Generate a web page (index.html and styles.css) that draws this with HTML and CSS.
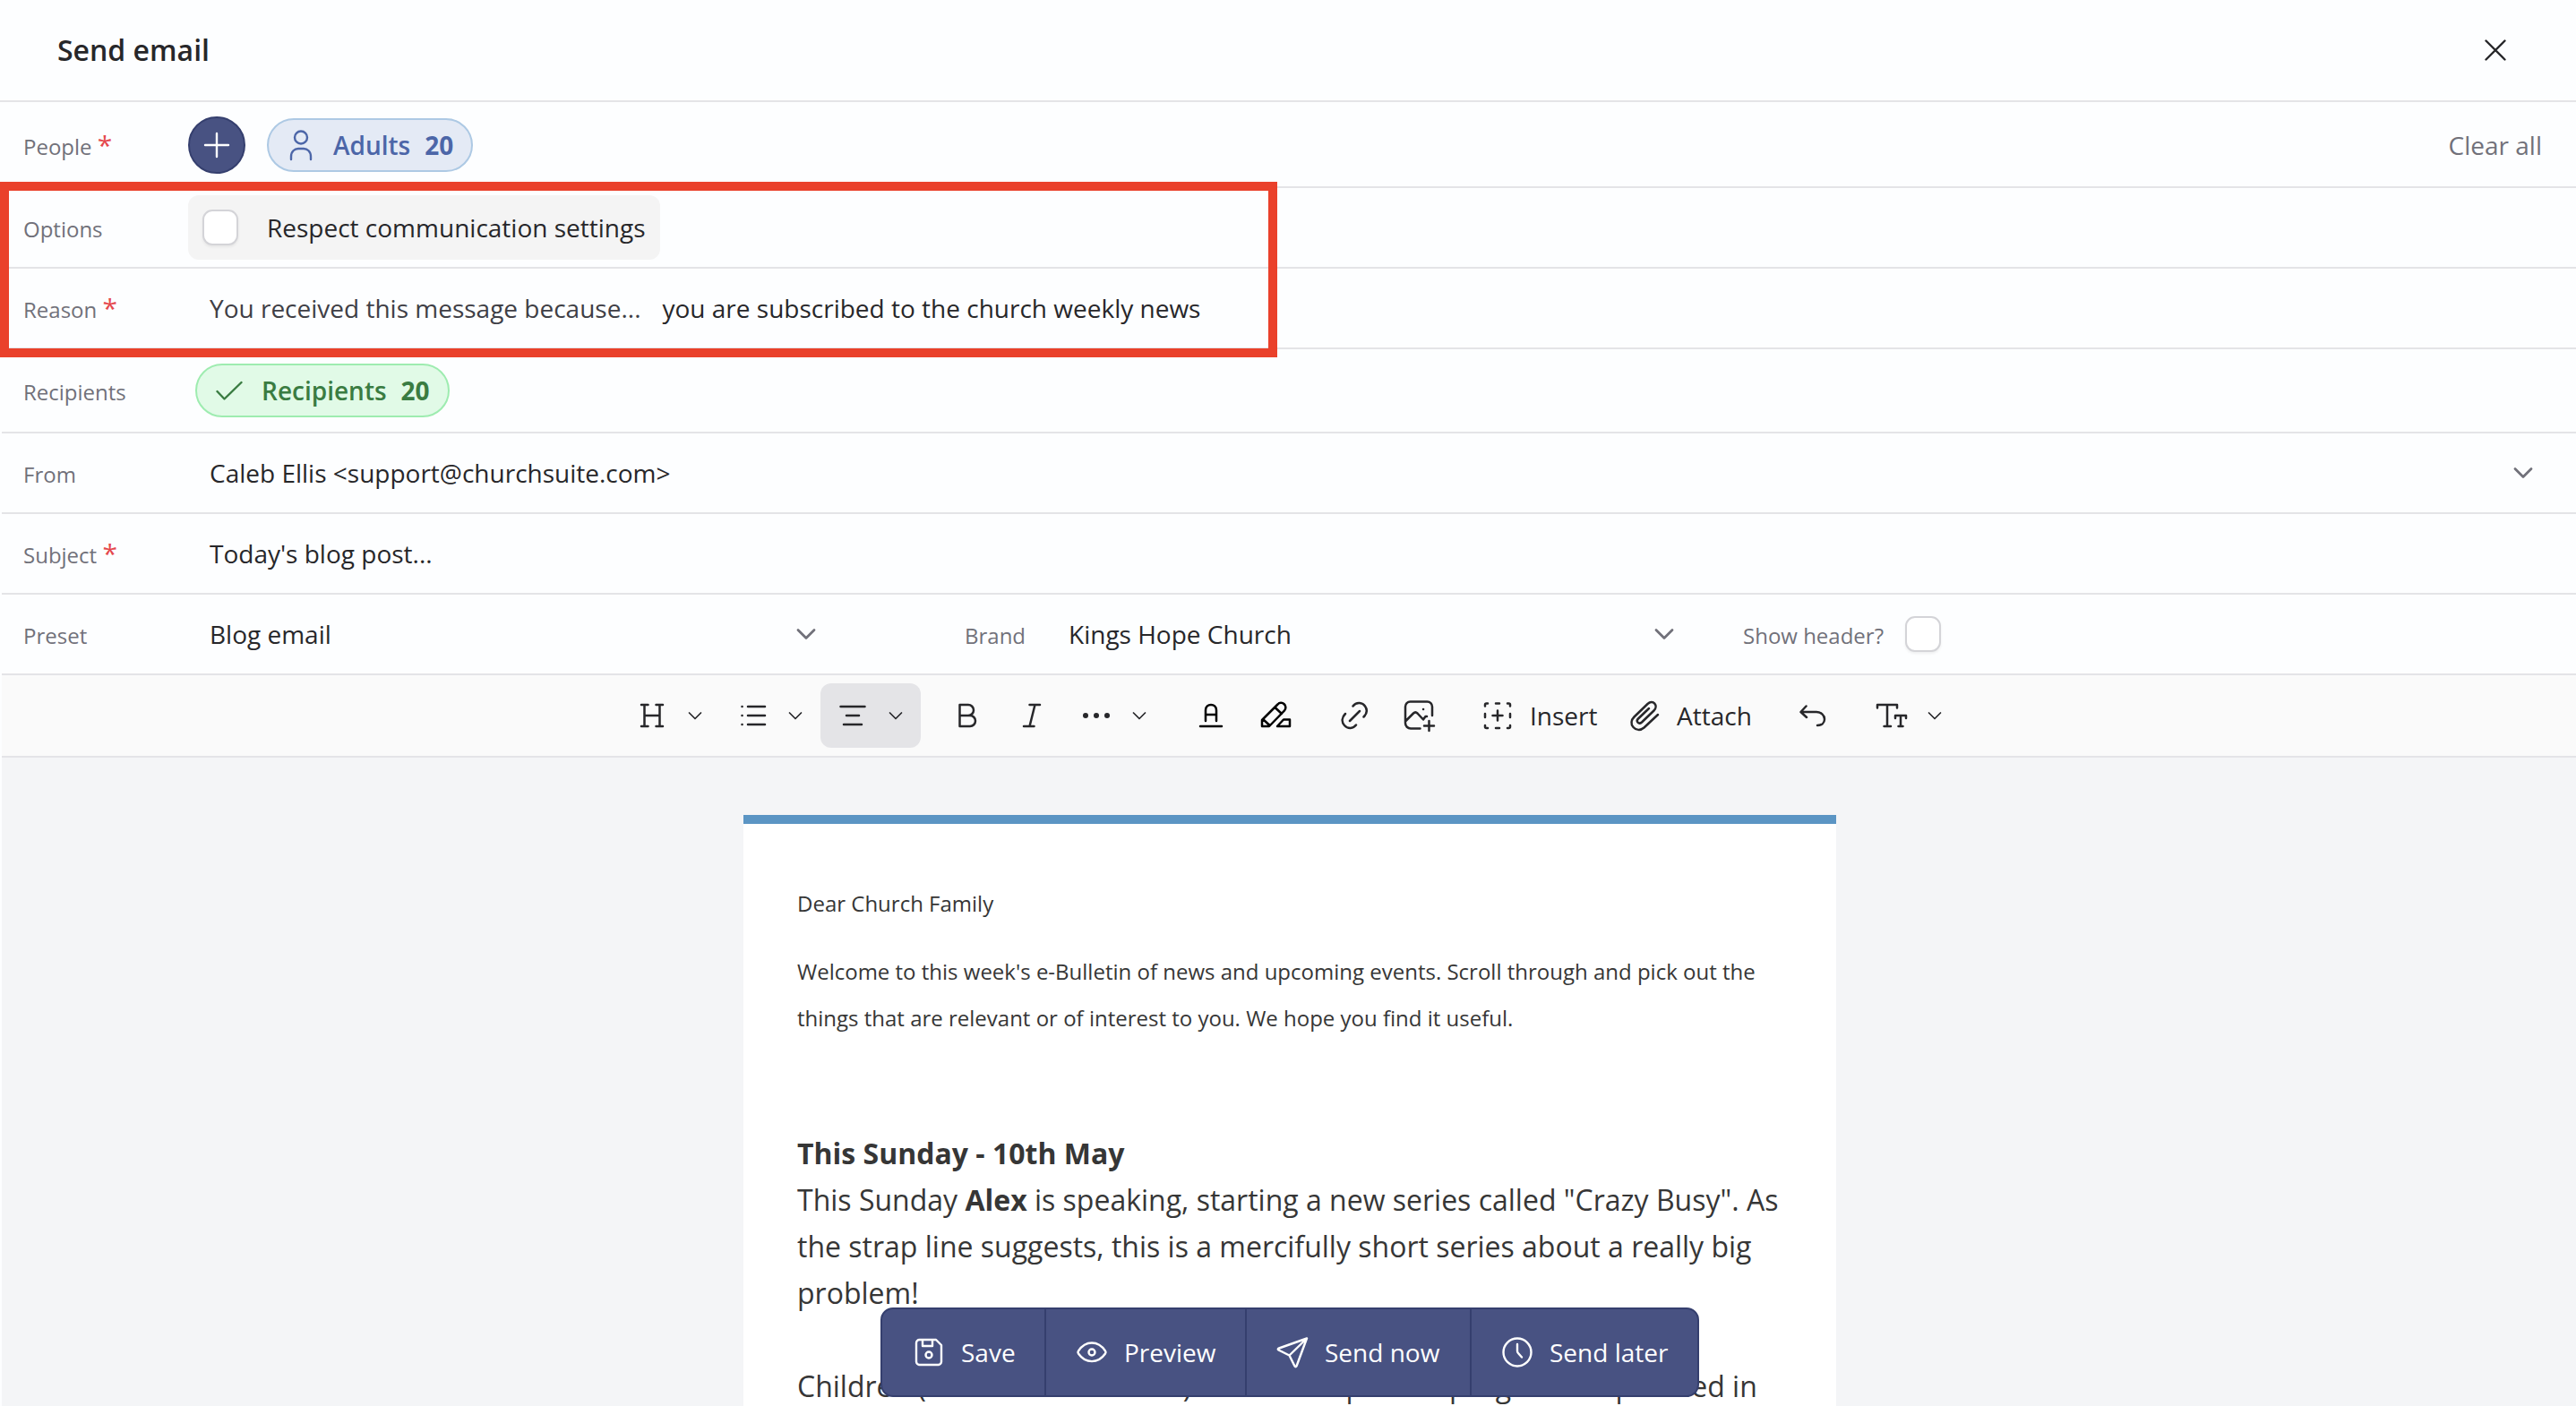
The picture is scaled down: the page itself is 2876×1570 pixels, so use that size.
FILE: index.html
```html
<!DOCTYPE html>
<html lang="en">
<head>
    <meta charset="UTF-8">
    <meta name="viewport" content="width=device-width, initial-scale=1.0">
    <title>Send email</title>
    <link rel="stylesheet" href="styles.css">
</head>
<body>
    <header class="header">
        <h1>Send email</h1>
        <svg class="icon close" viewBox="0 0 48 48"><path d="M13.500 13.500l21 21M34.500 13.500l-21 21"/></svg>
    </header>

    <main class="content">
        <!-- Form rows -->
        <div class="row row-people">
            <label class="label">People <span class="required">*</span></label>
            <button class="add-button">
                <svg class="icon" viewBox="0 0 48 48"><path d="M24 11v26M11 24h26"/></svg>
            </button>
            <div class="pill pill-blue">
                <svg class="icon" viewBox="0 0 48 48"><circle cx="24" cy="15.500" r="7"/><path d="M13 40v-3c0-6 4-9 8-9h6c4 0 8 3 8 9v3"/></svg>
                <span>Adults</span>
                <span class="count">20</span>
            </div>
            <a class="clear-all">Clear all</a>
        </div>
        <div class="row">
            <label class="label">Options</label>
            <div class="option">
                <span class="checkbox"></span>
                <span>Respect communication settings</span>
            </div>
        </div>
        <div class="row">
            <label class="label">Reason <span class="required">*</span></label>
            <span class="value prefix">You received this message because...</span>
            <span class="reason">you are subscribed to the church weekly news</span>
        </div>
        <div class="row row-recipients">
            <label class="label">Recipients</label>
            <div class="pill pill-green">
                <svg class="icon" viewBox="0 0 48 48"><path d="M10.500 25l8 8.500 19-18.500"/></svg>
                <span>Recipients</span>
                <span class="count">20</span>
            </div>
        </div>
        <div class="row">
            <label class="label">From</label>
            <span class="value">Caleb Ellis &lt;support@churchsuite.com&gt;</span>
            <svg class="select-arrow from-arrow" viewBox="0 0 24 24"><path d="M3 7.500l9 9 9-9"/></svg>
        </div>
        <div class="row">
            <label class="label">Subject <span class="required">*</span></label>
            <span class="value">Today's blog post...</span>
        </div>
        <div class="row row-preset">
            <div class="field">
                <label class="label">Preset</label>
                <span class="value">Blog email</span>
                <svg class="select-arrow" viewBox="0 0 24 24"><path d="M3 7.500l9 9 9-9"/></svg>
            </div>
            <div class="field">
                <label class="label">Brand</label>
                <span class="value">Kings Hope Church</span>
                <svg class="select-arrow" viewBox="0 0 24 24"><path d="M3 7.500l9 9 9-9"/></svg>
            </div>
            <div class="field">
                <label class="label">Show header?</label>
                <span class="checkbox"></span>
            </div>
        </div>

        <!-- Editor toolbar -->
        <div class="toolbar">
            <div class="tool-group">
                <button class="tool">
                    <svg class="icon" viewBox="0 0 48 48"><path d="M15.500 12v24M32.500 12v24M12 12h7.500M28.500 12H36M12 36h7.500M28.500 36H36M15.500 24h17"/></svg>
                    <svg class="arrow" viewBox="0 0 24 24"><path d="M5.500 9l6.500 6.500L18.500 9"/></svg>
                </button>
                <button class="tool">
                    <svg class="icon" viewBox="0 0 48 48"><path d="M19 14h19M19 24h19M19 34h19M12.500 14h.1M12.500 24h.1M12.500 34h.1"/></svg>
                    <svg class="arrow" viewBox="0 0 24 24"><path d="M5.500 9l6.500 6.500L18.500 9"/></svg>
                </button>
                <button class="tool active">
                    <svg class="icon" viewBox="0 0 48 48"><path d="M10.500 14h27M17 24h14M14 34h20"/></svg>
                    <svg class="arrow" viewBox="0 0 24 24"><path d="M5.500 9l6.500 6.500L18.500 9"/></svg>
                </button>
            </div>
            <div class="tool-group">
                <button class="tool"><svg class="icon" viewBox="0 0 48 48"><path d="M15.500 12h9.500a5.800 5.800 0 0 1 0 12h-9.500zM25 24h2a6 6 0 0 1 0 12H15.500V24"/></svg></button>
                <button class="tool"><svg class="icon" viewBox="0 0 48 48"><path d="M21.500 12H33M15 36h11.500M27.500 12l-6 24"/></svg></button>
                <button class="tool">
                    <svg class="icon dots" viewBox="0 0 48 48"><circle cx="12" cy="24" r="3"/><circle cx="24" cy="24" r="3"/><circle cx="36" cy="24" r="3"/></svg>
                    <svg class="arrow" viewBox="0 0 24 24"><path d="M5.500 9l6.500 6.500L18.500 9"/></svg>
                </button>
            </div>
            <div class="tool-group">
                <button class="tool dark"><svg class="icon" viewBox="0 0 48 48"><path d="M12 36h24M18 30V18c0-8 12-8 12 0v12M18 23h12"/></svg></button>
                <button class="tool dark"><svg class="icon" viewBox="0 0 48 48"><path d="M9 36v-7L26.500 11.500a5 5 0 0 1 7.500 7L17 36zM23.500 15l7.500 7M10.500 28.500l7 6.500M26 36l7-7.500h7V36z"/></svg></button>
            </div>
            <div class="tool-group">
                <button class="tool"><svg class="icon" viewBox="0 0 48 48"><path d="M19 30l11-11M22.500 13.500c4-5.500 11-4 13.500 0 2.800 4 2 8.500-1.500 12M14 22c-4 4-4.500 9-1 13 4 4.500 10 3.500 13-.500"/></svg></button>
                <button class="tool"><svg class="icon" viewBox="0 0 48 48"><path d="M25.500 38.500H15a6 6 0 0 1-6-6V14a5.500 5.500 0 0 1 5.500-5.500h19A5.500 5.500 0 0 1 39 14v10M9.500 30l8.500-8.500c1.500-1.500 3-1.500 4.500 0l6.500 7 2.500-3.500H33M29 17h.1M35.500 30v11M30 35.500h11"/></svg></button>
            </div>
            <div class="tool-group">
                <button class="tool tool-insert">
                    <svg class="icon" viewBox="0 0 48 48"><path d="M10 13.500V12q0-1.500 1.500-1.500H13M35 10.500h1.500Q38 10.500 38 12v1.500M38 35v1.500q0 1.500-1.500 1.500H35M13 38h-1.500Q10 38 10 36.500V35M22 10.500h4M22 38h4M10 22v4M38 22v4M24 18.500v11M18.500 24h11"/></svg>
                    <span>Insert</span>
                </button>
                <button class="tool tool-attach">
                    <svg class="icon" viewBox="0 0 48 48"><path d="M39 23L23.500 37.500c-4 3.500-9 3-12-.500s-2.500-8 1-11.500L27.500 11c6-5.500 12.500 2 7 7.500L21 31.500c-3.500 3-7-1-4-4L29 16"/></svg>
                    <span>Attach</span>
                </button>
            </div>
            <div class="tool-group">
                <button class="tool"><svg class="icon" viewBox="0 0 48 48"><path d="M16.500 13.500L10.500 20l6.500 6M11 20h17c5 0 9 3.500 9 8s-3.500 7-8 7"/></svg></button>
            </div>
            <div class="tool-group">
                <button class="tool">
                    <svg class="icon" viewBox="0 0 48 48"><path d="M8 15.500V12h22v3.500M19 12v24M15.500 36H23M28 27v-3h12v3M34 24v12M31.500 36h5"/></svg>
                    <svg class="arrow" viewBox="0 0 24 24"><path d="M5.500 9l6.500 6.500L18.500 9"/></svg>
                </button>
            </div>
        </div>

        <!-- Email body -->
        <div class="editor">
            <article class="email">
                <p class="small">Dear Church Family</p>
                <p class="small">Welcome to this week's e-Bulletin of news and upcoming events. Scroll through and pick out the<br>things that are relevant or of interest to you. We hope you find it useful.</p>
                <div class="story">
                    <strong>This Sunday - 10th May</strong><br>
                    This Sunday <strong>Alex</strong> is speaking, starting a new series called "Crazy Busy". As<br>
                    the strap line suggests, this is a mercifully short series about a really big<br>
                    problem!<br>
                    <br>
                    Children (those in Year 1 to 6) have a fun packed programme planned in
                </div>
            </article>
        </div>
    </main>

    <div class="highlight"></div>

    <!-- Floating actions -->
    <div class="actions">
        <button class="action">
            <svg class="icon" viewBox="0 0 48 48"><path d="M10 13.500a3.500 3.500 0 0 1 3.500-3.500H32l6 6v18.500a3.500 3.500 0 0 1-3.500 3.500h-21a3.500 3.500 0 0 1-3.500-3.500zM17 10v7h11v-7"/><circle cx="24" cy="27" r="3.500"/></svg>
            <span>Save</span>
        </button>
        <button class="action">
            <svg class="icon" viewBox="0 0 48 48"><path d="M9 25.500a2.500 2.500 0 0 1 0-3C17 10.500 31 10.500 39 22.500a2.500 2.500 0 0 1 0 3C31 37 17 37 9 25.500z"/><circle cx="24" cy="24" r="3.500"/></svg>
            <span>Preview</span>
        </button>
        <button class="action">
            <svg class="icon" viewBox="0 0 48 48"><path d="M40 8.500L9 19.500c-1.500.500-1.500 1.500-.500 2L20.500 27.500l6 12c.500 1 1.500 1 2 0zM20.500 27.500L40 8.500"/></svg>
            <span>Send now</span>
        </button>
        <button class="action">
            <svg class="icon" viewBox="0 0 48 48"><circle cx="24" cy="24" r="15.500"/><path d="M24 15v7.500q0 1.500 1 2.500l4 4.500"/></svg>
            <span>Send later</span>
        </button>
    </div>
</body>
</html>
```
FILE: styles.css
```css
* {
    margin: 0;
    padding: 0;
    box-sizing: border-box;
}

body {
    height: 1570px;
    overflow: hidden;
    position: relative;
    background: #fdfeff;
    color: #27272a;
    font-family: 'Open Sans', 'Noto Sans', sans-serif;
    font-size: 28px;
}

button {
    border: none;
    background: none;
    font: inherit;
    color: inherit;
}

.icon {
    width: 48px;
    height: 48px;
    flex: none;
    fill: none;
    stroke: currentColor;
    stroke-width: 2.4;
    stroke-linecap: round;
    stroke-linejoin: round;
}

.header {
    height: 114px;
    padding: 0 66px 2px 64px;
    display: flex;
    align-items: center;
    justify-content: space-between;
    border-bottom: 2px solid #e4e4e7;
}

.header h1 {
    font-size: 32px;
    font-weight: 600;
}

.close {
    margin-top: 2px;
}

.content {
    margin-left: 2px;
}

/* Form */
.row {
    height: 90px;
    display: flex;
    align-items: center;
    border-bottom: 2px solid #e4e4e7;
}

.row-people {
    height: 96px;
    padding-top: 2px;
}

.row-recipients {
    height: 94px;
}

.label {
    width: 208px;
    flex: none;
    padding: 3px 0 0 24px;
    color: #71717a;
    font-size: 24px;
    white-space: nowrap;
}

.required {
    color: #e5484d;
    font-size: 30px;
    line-height: 24px;
}

.value {
    padding-left: 24px;
    white-space: nowrap;
}

.prefix {
    color: #3f3f46;
}

.reason {
    margin-left: 24px;
}

.add-button {
    width: 64px;
    height: 64px;
    display: flex;
    align-items: center;
    justify-content: center;
    border: 2px solid #353f6e;
    border-radius: 50%;
    background: #485282;
    color: #fff;
}

.pill {
    height: 60px;
    display: flex;
    align-items: center;
    border: 2px solid;
    border-radius: 30px;
    font-weight: 600;
}

.pill .count {
    margin-left: 16px;
    font-weight: 700;
}

.pill-blue {
    width: 230px;
    margin-left: 24px;
    padding-left: 12px;
    border-color: #adc9e4;
    background: #e4eaf5;
    color: #4c66a8;
}

.pill-blue .icon,
.pill-green .icon {
    margin-right: 12px;
}

.pill-green {
    width: 284px;
    margin-left: 8px;
    padding-left: 12px;
    border-color: #9eecb0;
    background: #e1fae7;
    color: #3a7c42;
}

.clear-all {
    margin-left: auto;
    margin-right: 38px;
    color: #71717a;
}

.option {
    width: 527px;
    height: 72px;
    padding-left: 16px;
    display: flex;
    align-items: center;
    gap: 32px;
    border-radius: 12px;
    background: #f4f4f4;
    white-space: nowrap;
}

.checkbox {
    width: 40px;
    height: 40px;
    flex: none;
    border: 2px solid #d4d4d8;
    border-radius: 11px;
    background: #fff;
    box-shadow: 0 2px 3px rgba(0, 0, 0, 0.06);
}

.select-arrow {
    width: 24px;
    height: 24px;
    margin-left: auto;
    fill: none;
    stroke: #71717a;
    stroke-width: 2.8;
    stroke-linecap: round;
    stroke-linejoin: round;
}

.from-arrow {
    margin-right: 47px;
}

.field {
    display: flex;
    align-items: center;
}

.field:nth-child(1) {
    width: 910px;
}

.field:nth-child(2) {
    width: 807px;
    margin-left: 151px;
}

.field:nth-child(2) .label {
    width: 106px;
    padding-left: 14px;
}

.field:nth-child(3) .label {
    width: 257px;
    padding-left: 76px;
}

/* Toolbar */
.toolbar {
    height: 92px;
    padding-left: 690px;
    display: flex;
    align-items: center;
    gap: 16px;
    border-bottom: 2px solid #e4e4e7;
    background: #fafafa;
}

.tool-group {
    display: flex;
}

.tool {
    height: 72px;
    padding: 0 12px;
    display: flex;
    align-items: center;
    border-radius: 12px;
}

.tool.active {
    background: #e4e4e7;
}

.tool.dark {
    color: #000;
}

.tool .icon {
    stroke-width: 2.5;
}

.tool .dots {
    fill: currentColor;
    stroke: none;
}

.arrow {
    width: 24px;
    height: 24px;
    margin: 0 4px 0 12px;
    fill: none;
    stroke: currentColor;
    stroke-width: 1.7;
    stroke-linecap: round;
    stroke-linejoin: round;
}

.tool-insert {
    width: 164px;
    gap: 12px;
}

.tool-attach {
    width: 172px;
    gap: 12px;
}

/* Email preview */
.editor {
    height: 724px;
    padding: 64px 0 0 828px;
    background: #f4f5f7;
    overflow: hidden;
}

.email {
    width: 1220px;
    height: 700px;
    padding: 63px 60px 0;
    border-top: 10px solid #5b95c4;
    background: #fff;
    color: #363636;
    line-height: 52px;
    white-space: nowrap;
}

.small {
    margin-bottom: 24px;
    font-size: 24px;
}

.story {
    margin-top: 99px;
    font-size: 32px;
}

/* Red frame laid over the options and reason rows */
.highlight {
    position: absolute;
    top: 203px;
    left: 0;
    width: 1426px;
    height: 196px;
    border: 10px solid #ea412b;
}

.actions {
    position: absolute;
    top: 1460px;
    left: 983px;
    height: 100px;
    display: grid;
    grid-template-columns: 181px 224px 251px 254px;
    border: 2px solid #353f6e;
    border-radius: 14px;
    background: #485282;
    color: #fff;
    overflow: hidden;
}

.action {
    padding-left: 28px;
    display: flex;
    align-items: center;
    gap: 12px;
    white-space: nowrap;
}

.action + .action {
    padding-left: 27px;
    border-left: 2px solid #353f6e;
}
```
